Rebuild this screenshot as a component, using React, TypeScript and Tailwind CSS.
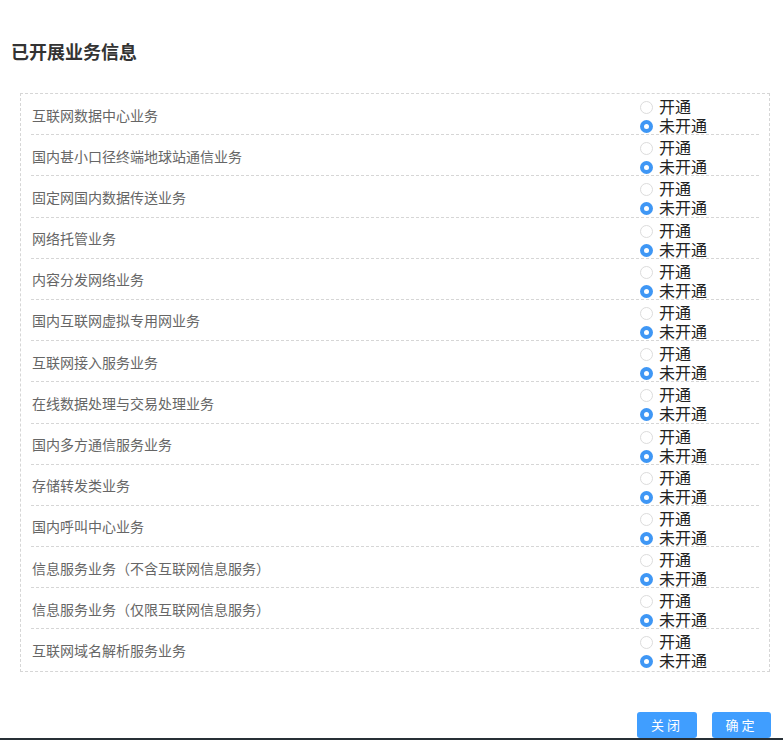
import React from "react";

const items = [
  "互联网数据中心业务",
  "国内甚小口径终端地球站通信业务",
  "固定网国内数据传送业务",
  "网络托管业务",
  "内容分发网络业务",
  "国内互联网虚拟专用网业务",
  "互联网接入服务业务",
  "在线数据处理与交易处理业务",
  "国内多方通信服务业务",
  "存储转发类业务",
  "国内呼叫中心业务",
  "信息服务业务（不含互联网信息服务）",
  "信息服务业务（仅限互联网信息服务）",
  "互联网域名解析服务业务",
];

function Radio({ checked, label }: { checked: boolean; label: string }) {
  return (
    <div className="flex items-center h-[19px]">
      {checked ? (
        <span className="w-[13px] h-[13px] rounded-full bg-[#3f97f5] flex items-center justify-center mt-[2px] mr-[6px] ml-[1px]">
          <span className="w-[5px] h-[5px] rounded-full bg-white" />
        </span>
      ) : (
        <span className="w-[13px] h-[13px] rounded-full border border-[#dcdcdc] bg-white mt-[2px] mr-[6px] ml-[1px]" />
      )}
      <span className="text-[16px] leading-[19px] text-[#222]">{label}</span>
    </div>
  );
}

export default function App() {
  return (
    <div
      className="w-[783px] h-[740px] bg-white relative flex flex-col"
      style={{ fontFamily: '"Microsoft YaHei", "Noto Sans CJK SC", "Noto Sans", sans-serif' }}
    >
      <div className="pl-[11px] pt-[39px] h-[93px]">
        <h1 className="text-[18px] leading-[24px] font-bold text-[#333]">已开展业务信息</h1>
      </div>
      <div className="ml-[20px] w-[750px] border border-dashed border-[#d6d6d6] px-[10px]">
        {items.map((t, i) => (
          <div
            key={i}
            className={
              "grid grid-cols-[608px_1fr] h-[41.2px] " +
              (i < items.length - 1 ? "border-b border-dashed border-[#d6d6d6]" : "")
            }
          >
            <div className="self-center text-[14px] text-[#666] pl-[1px] leading-[20px]">{t}</div>
            <div className="self-start flex flex-col pt-[3px]">
              <Radio checked={false} label="开通" />
              <Radio checked={true} label="未开通" />
            </div>
          </div>
        ))}
      </div>
      <div className="flex justify-end gap-[15px] pr-[12px] mt-[40px]">
        <button className="w-[60px] h-[26px] rounded-[3px] bg-[#409eff] text-white text-[13px] tracking-[3px]">
          关闭
        </button>
        <button className="w-[59px] h-[26px] rounded-[3px] bg-[#409eff] text-white text-[13px] tracking-[3px]">
          确定
        </button>
      </div>
      <div className="absolute left-0 right-0 bottom-0 h-[2px] bg-[#283036]" />
    </div>
  );
}
